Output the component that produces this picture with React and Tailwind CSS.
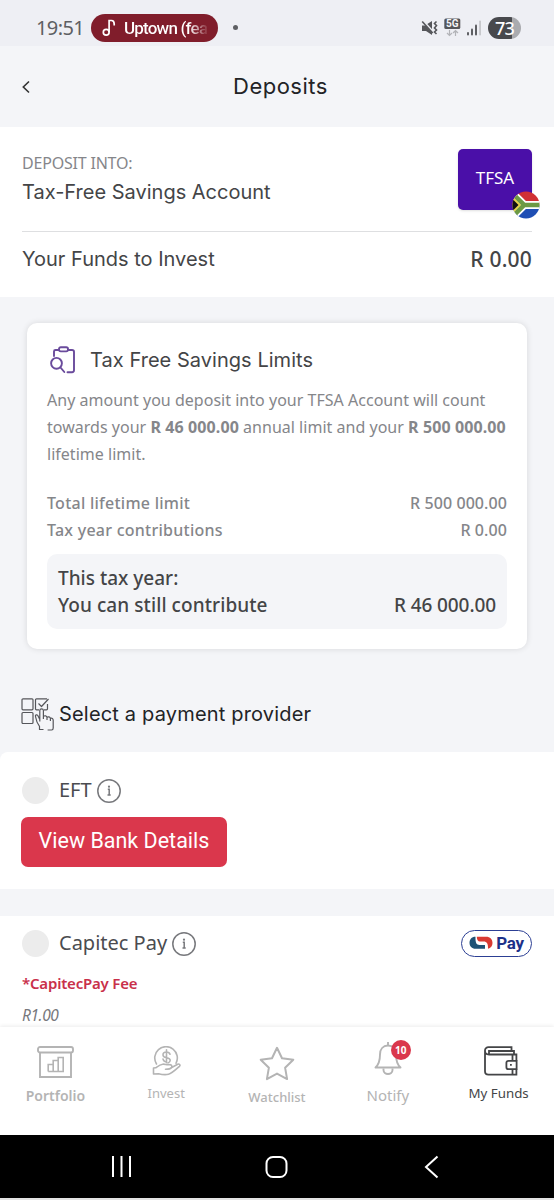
import clsx from 'clsx';

const MutedIcon = () => (
  <svg width="17" height="18" viewBox="0 0 17 18" fill="none" stroke="#55565a" strokeWidth="1.3">
    <path d="M1 6.500h3L11 2v14L5 12H1z" fill="#55565a" stroke="none" />
    <path d="M1.500 1.500l11 12" stroke="#eeeff4" strokeWidth="2.500" />
    <path d="M1.200 2.500l10.500 11.500" strokeWidth="1.600" />
    <path d="M15.500 2.500l-2 2 2 2-2 2.500 2 2-2 2 2 2" strokeWidth="1.600" />
  </svg>
);

const NetworkIcon = () => (
  <svg width="17" height="19" viewBox="0 0 17 19" fill="none">
    <rect x="0.300" y="0.500" width="16" height="10.500" rx="1.500" fill="#55565a" />
    <text x="8.300" y="9.200" textAnchor="middle" fontSize="10" fontWeight="700" fill="#f4f5f8" fontFamily="Roboto, sans-serif">
      5G
    </text>
    <path d="M5.500 12v5.500M3 15l2.500 2.500L8 15M11.500 18v-5.500M9 15l2.500-2.500L14 15" stroke="#b3b4b8" strokeWidth="1.200" />
  </svg>
);

const SignalIcon = () => (
  <svg width="15" height="16" viewBox="0 0 15 16" fill="#5e5f63">
    <rect x="0" y="12" width="2" height="3.500" rx="1" />
    <rect x="4" y="8.500" width="2" height="7" rx="1" />
    <rect x="8" y="4.500" width="2" height="11" rx="1" />
    <rect x="12.200" y="0.500" width="1.700" height="15" rx="0.800" fill="#c3c4c8" />
  </svg>
);

const FlagIcon = () => (
  <svg width="28" height="28" viewBox="0 0 28 28">
    <clipPath id="flag">
      <circle cx="14" cy="14" r="13.500" />
    </clipPath>
    <g clipPath="url(#flag)">
      <path d="M0 0h28v14H0z" fill="#d03034" />
      <path d="M0 14h28v14H0z" fill="#1f4fb4" />
      <path d="M-1 1L12 14h17M-1 27L12 14" fill="none" stroke="#fff" strokeWidth="8.200" />
      <path d="M-1 1L12 14h17M-1 27L12 14" fill="none" stroke="#6d9a45" strokeWidth="4.600" />
      <path d="M0 5l9 9-9 9z" fill="#e9d34a" />
      <path d="M0 7.500L6.500 14 0 20.500z" fill="#111" />
    </g>
  </svg>
);

const LimitsIcon = () => (
  <svg width="26" height="28" viewBox="0 0 26 28" fill="none" stroke="#6a4b9c" strokeWidth="1.900" strokeLinecap="round" strokeLinejoin="round">
    <path d="M4 10V5.500C4 4.500 4.500 4 5.500 4H9M18 4h4c1.300 0 2 .6 2 1.800V24c0 1.500-.7 2.200-2 2.200h-4.500" />
    <rect x="9" y="1.200" width="9" height="4.200" rx="1.800" />
    <circle cx="6.500" cy="17.300" r="5.400" />
    <path d="M10.500 21.500l3.800 4.500" />
  </svg>
);

const SelectIcon = () => (
  <svg width="34" height="34" viewBox="0 0 34 34" fill="none" stroke="#55565a" strokeWidth="1.200" strokeLinejoin="round">
    <rect x="1" y="1.800" width="11" height="11" rx="1" />
    <rect x="1" y="15.500" width="11" height="11" rx="1" />
    <path d="M18 12.800h-2.500c-.6 0-1-.4-1-1v-9c0-.6.4-1 1-1H26M26.500 7v4.800c0 .6-.4 1-1 1H23" />
    <path d="M17.500 6.500l3 3L27.500 2" />
    <path d="M18.800 24.500V13.500c0-2.300 3.600-2.300 3.600 0v6c1.300-1.300 3.300-.8 3.600.8 1.300-1 3-.4 3.400 1 1.500-.6 2.800.3 2.800 2v7.700c0 1-.6 2-1.600 2h-4M22.400 19v3M26 20.500v2.500M29.400 21.500v2.500M18.800 22.500l-2-4c-1-1.300-2.800-.6-2.300 1 .6 3.800 1.700 7 4 9.800v3.200h4" />
  </svg>
);

const InfoIcon = () => (
  <svg width="24" height="24" viewBox="0 0 24 24" fill="none" stroke="#77787c">
    <circle cx="12" cy="12" r="11.200" strokeWidth="1.500" />
    <path d="M10.800 10.300h1.400v5.500M10.500 16h3.200" strokeWidth="1.500" />
    <circle cx="12" cy="7.700" r="1.100" fill="#77787c" stroke="none" />
  </svg>
);

const CapitecLogo = () => (
  <svg width="24" height="14" viewBox="0 0 24 14">
    <path d="M6.500 .8C2.500.8.5 3.500.5 6.800c0 3.600 2.400 6 6 6H16V9H10.500C7.500 9 6.300 7 6.500 .8z" fill="#1f5275" />
    <path d="M7.800.8H17c4.300 0 6.500 2.700 6.500 6.200 0 3-1.700 5-4.500 5.800C19.200 7.500 18 5.500 14.500 5.500H11C9 5.500 7.800 4 7.800.8z" fill="#d93a32" />
  </svg>
);

const PortfolioIcon = () => (
  <svg width="37" height="32" viewBox="0 0 37 32" fill="none" stroke="#b4b4b4" strokeWidth="1.900">
    <rect x="1" y="1" width="35" height="5.500" rx="2" />
    <path d="M3 6.500V31h31V6.500" />
    <path d="M11.200 25.500v-7h5v7M16.200 25.500v-11h5v11M21.200 25.500v-14h5v14zM11.200 25.500h15" strokeWidth="1.600" />
  </svg>
);

const InvestIcon = () => (
  <svg width="29" height="30" viewBox="0 0 29 30" fill="none" stroke="#b4b4b4" strokeWidth="1.600" strokeLinejoin="round" strokeLinecap="round">
    <path d="M4.500 18A11.300 11.300 0 1 1 24 17.300" />
    <path d="M18 8.200c-.6-1.700-2-2.200-3.500-2.200-2 0-3.500 1-3.500 2.900 0 4 7.200 1.600 7.200 5.400 0 1.500-1 2.300-2.200 2.700M14.500 3.800v13M11 13c.3 1.400 1 2.200 2 2.600" />
    <path d="M1.500 22v6l5-.3c3 .8 6.500 1.400 10 .6 3-.7 6-3.500 11-8 1.200-1.300-.3-2.800-1.800-2l-6 3.200c.5-2.300-.8-3-2.500-2.800-2.500.5-4-.8-6.500-.5-3 .3-5 2.200-7 3.600z" fill="#fff" />
    <path d="M19.500 21.500c-1 1.600-3.500 1.800-6 1.800" />
  </svg>
);

const WatchlistIcon = () => (
  <svg width="36" height="35" viewBox="0 0 36 35" fill="none" stroke="#b4b4b4" strokeWidth="2" strokeLinejoin="round">
    <path d="M18 1.800l5 10.400 11.300 1.500-8.200 8 2 11.400L18 27.600 7.900 33.100l2-11.400-8.200-8L13 12.200z" />
  </svg>
);

const NotifyIcon = () => (
  <svg width="28" height="34" viewBox="0 0 28 34" fill="none" stroke="#b4b4b4" strokeWidth="1.900" strokeLinejoin="round">
    <path d="M14 0v4M9.500 26.500V28c0 5.300 9 5.300 9 0v-1.500" />
    <path d="M14 3.500c-5 0-8 3.800-8 9 0 6.500-1.200 10-4.500 13h25c-3.300-3-4.500-6.500-4.500-13 0-5.200-3-9-8-9z" />
  </svg>
);

const FundsIcon = () => (
  <svg width="34" height="30" viewBox="0 0 34 30" fill="none" stroke="#444547" strokeWidth="1.800">
    <path d="M27.500 5V1.200H4.500C2.500 1.200 1 2.600 1 4.500v20.800c0 2 1.300 3.400 3.400 3.400h28V23.500M32.400 14.500V8.500H5C2.300 8.500 1 7 1 5" />
    <path d="M5 8.500V5h25v3.500M28.500 8.500v6M28.500 23.500v5" />
    <path d="M32.600 14.800v8.400h-8c-1.300 0-2.200-.8-2.200-2v-4.400c0-1.200.9-2 2.200-2z" />
    <path d="M26 18.800h1.800" />
  </svg>
);

const tabs = [
  { label: 'Portfolio', Icon: PortfolioIcon, pad: 'pt-[19px]', gap: 'h-[40px]', text: 'text-[14px] font-semibold' },
  { label: 'Invest', Icon: InvestIcon, pad: 'pt-[19px]', gap: 'h-[37px]', text: 'text-[13px]' },
  { label: 'Watchlist', Icon: WatchlistIcon, pad: 'pt-[19px]', gap: 'h-[41px]', text: 'text-[13px] font-medium' },
  { label: 'Notify', Icon: NotifyIcon, pad: 'pt-[15px]', gap: 'h-[43px]', text: 'text-[15px]', badge: 10 },
  { label: 'My Funds', Icon: FundsIcon, pad: 'pt-[19px]', gap: 'h-[37px] left-[2px]', text: 'text-[13.3px]', active: true },
];

const StatusBar = () => (
  <div className="flex h-[46px] items-center bg-[#eeeff4] pt-[9px]">
    <span className="ml-[36px] w-[55px] text-[20px] leading-[28px] tracking-[-0.6px] text-[#5e5f63]">19:51</span>
    <div className="flex h-[28px] w-[127px] items-center rounded-full bg-[#801d2b] pl-[11px] text-white">
      <svg width="14" height="18" viewBox="0 0 14 18" fill="none" stroke="white" strokeWidth="1.700">
        <circle cx="4.200" cy="13.200" r="2.900" />
        <path d="M7.100 13.200V1.500h2.400c1.500 0 2.700 1.400 2.700 3.500v1.500" />
      </svg>
      <span className="ml-[8px] whitespace-nowrap bg-linear-to-r from-white from-78% to-white/10 bg-clip-text font-['Roboto',sans-serif] text-[17px] font-medium leading-[28px] tracking-[-0.8px] text-transparent">
        Uptown (fea
      </span>
    </div>
    <span className="ml-[15px] h-[5px] w-[5px] rounded-full bg-[#5e5f63]" />
    <div className="ml-auto mr-[33px] flex items-center">
      <MutedIcon />
      <div className="ml-[6px]"><NetworkIcon /></div>
      <div className="ml-[6px] mr-[6px]"><SignalIcon /></div>
      <div className="flex h-[22px] w-[33px] items-center justify-center rounded-full bg-linear-to-r from-[#48494d] from-73% to-[#aaabaf] to-73% text-[18px] font-medium leading-[22px] tracking-[-0.8px] text-white">
        73
      </div>
    </div>
  </div>
);

const Provider = ({ name, children }) => (
  <div className="flex h-[28px] items-center">
    <span className="h-[27px] w-[27px] rounded-full bg-[#ececec]" />
    <span className="ml-[10px] mr-[5px] text-[20px] leading-[28px] text-[#4b4c50]">{name}</span>
    <div className="pt-[2px]"><InfoIcon /></div>
    {children}
  </div>
);

const App = () => {
  return (
    <div className="flex h-[1200px] w-[554px] flex-col overflow-hidden bg-[#f4f5f8] font-['Noto_Sans',sans-serif]">
      <StatusBar />

      {/* Page header */}
      <header className="flex h-[81px] items-center">
        <svg className="ml-[21px]" width="10" height="14" viewBox="0 0 10 14" fill="none" stroke="#333" strokeWidth="1.600">
          <path d="M8 1.500L2.300 7 8 12.500" />
        </svg>
        <h1 className="ml-[202px] font-['Inter',sans-serif] text-[22px] tracking-[0.5px] text-[#222326]">Deposits</h1>
      </header>

      {/* Account */}
      <section className="h-[170px] shrink-0 bg-white px-[22px] pt-[22px]">
        <div className="flex h-[82px] justify-between">
          <div>
            <div className="text-[16px] leading-[28px] tracking-[-0.2px] text-[#85868a]">DEPOSIT INTO:</div>
            <div className="font-['Inter',sans-serif] text-[20px] leading-[30px] text-[#444547]">Tax-Free Savings Account</div>
          </div>
          <div className="relative flex h-[61px] w-[74px] items-center justify-center rounded-[5px] bg-[#4a0fa8] text-[17px] text-white shadow-sm">
            <span className="pb-[3px]">TFSA</span>
            <div className="absolute left-[54px] top-[42px]"><FlagIcon /></div>
          </div>
        </div>
        <div className="h-px bg-[#dedfe1]" />
        <div className="flex justify-between leading-[54px] text-[#444547]">
          <span className="font-['Inter',sans-serif] text-[20px]">Your Funds to Invest</span>
          <span className="text-[21px] font-medium tracking-[0.2px]">R 0.00</span>
        </div>
      </section>

      {/* Limits card */}
      <section className="mx-[27px] mt-[26px] h-[326px] shrink-0 rounded-[10px] bg-white px-[20px] pt-[17px] shadow-[0_0_6px_rgba(0,0,0,0.12)]">
        <div className="flex h-[40px] items-center">
          <div className="ml-[3px]"><LimitsIcon /></div>
          <h2 className="ml-[14px] font-['Inter',sans-serif] text-[20px] tracking-[0.04px] text-[#444547]">Tax Free Savings Limits</h2>
        </div>
        <p className="mt-[7px] whitespace-nowrap text-[16px] leading-[27px] tracking-[0.02px] text-[#85868a]">
          Any amount you deposit into your TFSA Account will count<br />
          towards your <b className="font-bold tracking-[0.1px]">R 46 000.00</b> annual limit and your <b className="font-bold tracking-[0.1px]">R 500 000.00</b><br />
          lifetime limit.
        </p>
        <div className="mt-[22px] text-[16px] font-medium leading-[27px] text-[#85868a]">
          <div className="flex justify-between">
            <span className="tracking-[0.25px]">Total lifetime limit</span>
            <span className="tracking-[0.08px]">R 500 000.00</span>
          </div>
          <div className="flex justify-between">
            <span className="tracking-[0.25px]">Tax year contributions</span>
            <span className="tracking-[0.08px]">R 0.00</span>
          </div>
        </div>
        <div className="mt-[10px] h-[75px] rounded-[10px] bg-[#f4f5f8] px-[11px] pt-[11px] text-[19px] font-medium leading-[27px] text-[#444547]">
          <div>This tax year:</div>
          <div className="flex justify-between">
            <span className="tracking-[0.08px]">You can still contribute</span>
            <span className="tracking-[-0.1px]">R 46 000.00</span>
          </div>
        </div>
      </section>

      {/* Payment providers */}
      <div className="flex h-[103px] shrink-0 items-center pl-[21px] pt-[26px]">
        <SelectIcon />
        <h2 className="ml-[4px] font-['Inter',sans-serif] text-[20px] tracking-[0.18px] text-[#222326]">Select a payment provider</h2>
      </div>

      <section className="h-[137px] shrink-0 rounded-tl-[8px] bg-white px-[22px] pt-[24px]">
        <Provider name="EFT" />
        <button className="-ml-px mt-[13px] h-[50px] w-[206px] rounded-[7px] bg-[#da374c] pb-px font-['Roboto',sans-serif] text-[21.5px] text-white">
          View Bank Details
        </button>
      </section>

      <section className="mt-[27px] h-[111px] shrink-0 overflow-hidden bg-white px-[22px] pt-[13px]">
        <Provider name="Capitec Pay">
          <div className="ml-auto flex h-[27px] w-[71px] items-center justify-center rounded-full border border-[#2c3f94] font-['Roboto',sans-serif] text-[17px] font-bold text-[#1d3189]">
            <CapitecLogo />
            <span className="ml-[3px] pt-px tracking-[-0.3px]">Pay</span>
          </div>
        </Provider>
        <div className="mt-[12px] text-[15px] font-semibold leading-[28px] tracking-[-0.2px] text-[#c9304a]">*CapitecPay Fee</div>
        <div className="mt-[4px] text-[15.5px] italic leading-[28px] tracking-[-0.4px] text-[#77787c]">R1.00</div>
      </section>

      {/* Bottom tabs */}
      <nav className="relative grid h-[108px] shrink-0 grid-cols-5 bg-white shadow-[0_-1px_4px_rgba(0,0,0,0.08)]">
        {tabs.map(({ label, Icon, pad, gap, text, active, badge }) => (
          <div key={label} className={clsx('flex flex-col items-center', pad, active ? 'text-[#444547]' : 'text-[#b4b4b4]')}>
            <div className={clsx('relative', gap)}>
              <Icon />
              {badge && (
                <span className="absolute -top-[2px] left-[17px] flex h-[20px] w-[20px] items-center justify-center rounded-full bg-[#da374c] text-[10px] font-bold text-white">
                  {badge}
                </span>
              )}
            </div>
            <span className={clsx('leading-[20px]', text)}>{label}</span>
          </div>
        ))}
      </nav>

      {/* System navigation */}
      <footer className="flex h-[63px] shrink-0 items-center bg-black">
        <svg className="ml-[111px]" width="22" height="22" viewBox="0 0 22 22" stroke="white" strokeWidth="2">
          <path d="M2 0v21M10.500 0v21M19 0v21" />
        </svg>
        <svg className="ml-[132px]" width="24" height="24" viewBox="0 0 24 24" fill="none" stroke="white" strokeWidth="2">
          <rect x="1.500" y="2" width="20" height="20" rx="6.500" />
        </svg>
        <svg className="ml-[135px]" width="16" height="24" viewBox="0 0 16 24" fill="none" stroke="white" strokeWidth="2">
          <path d="M13.500 1.500L2 12l11.500 10.500" />
        </svg>
      </footer>
      <div className="h-[2px] shrink-0 bg-[#e3e3e3]" />
    </div>
  );
};

export default App;
